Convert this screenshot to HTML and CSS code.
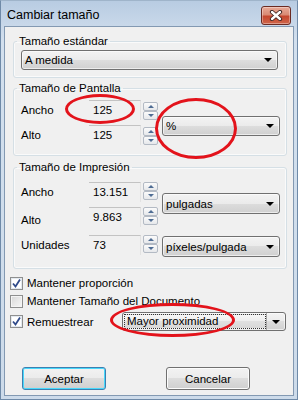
FILE: index.html
```html
<!DOCTYPE html>
<html lang="es">
  <head>
    <meta charset="UTF-8" />
    <title>Cambiar tamaño</title>
    <link rel="stylesheet" href="styles.css">
  </head>
  <body>
    <div class="window">
      <div class="titlebar">
        <span class="title">Cambiar tamaño</span>
        <div class="close">
          <svg width="14" height="11" viewBox="0 0 14 11">
            <path d="M3 2 L11 9 M11 2 L3 9" stroke="#3b2320" stroke-width="4.2" stroke-linecap="round" />
            <path d="M3 2 L11 9 M11 2 L3 9" stroke="#fff" stroke-width="2.4" stroke-linecap="round" />
          </svg>
        </div>
      </div>

      <div class="client">
        <fieldset class="group g-std">
          <legend>Tamaño estándar</legend>
          <div class="combo"><span class="combo-text">A medida</span><i class="arrow"></i></div>
        </fieldset>

        <fieldset class="group g-screen">
          <legend>Tamaño de Pantalla</legend>
          <div class="grid">
            <span class="lbl">Ancho</span>
            <div class="edit">125</div>
            <div class="spin"><span class="up"></span><span class="down"></span></div>
            <div class="combo unit unit-screen"><span class="combo-text">%</span><i class="arrow"></i></div>
            <span class="lbl">Alto</span>
            <div class="edit">125</div>
            <div class="spin"><span class="up"></span><span class="down"></span></div>
          </div>
        </fieldset>

        <fieldset class="group g-print">
          <legend>Tamaño de Impresión</legend>
          <div class="grid">
            <span class="lbl">Ancho</span>
            <div class="edit">13.151</div>
            <div class="spin"><span class="up"></span><span class="down"></span></div>
            <div class="combo unit unit-inch"><span class="combo-text">pulgadas</span><i class="arrow"></i></div>
            <span class="lbl lbl-low">Alto</span>
            <div class="edit">9.863</div>
            <div class="spin"><span class="up"></span><span class="down"></span></div>
            <span class="lbl">Unidades</span>
            <div class="edit">73</div>
            <div class="spin"><span class="up"></span><span class="down"></span></div>
            <div class="combo unit unit-res"><span class="combo-text">píxeles/pulgada</span><i class="arrow"></i></div>
          </div>
        </fieldset>

        <div class="checks">
          <label class="check-row">
            <span class="cb checked"><svg width="11" height="11" viewBox="0 0 11 11"><path d="M2 5.5 L4.5 8.5 L9 1.5" fill="none" stroke="#2f4a8a" stroke-width="1.8" /></svg></span>
            Mantener proporción
          </label>
          <label class="check-row">
            <span class="cb"></span>
            Mantener Tamaño del Documento
          </label>
          <div class="check-row row-resample">
            <span class="cb checked"><svg width="11" height="11" viewBox="0 0 11 11"><path d="M2 5.5 L4.5 8.5 L9 1.5" fill="none" stroke="#2f4a8a" stroke-width="1.8" /></svg></span>
            Remuestrear
            <div class="combo combo-focus">
              <span class="combo-text"><span class="focus-box">Mayor proximidad</span></span>
              <span class="drop"><i class="arrow"></i></span>
            </div>
          </div>
        </div>

        <div class="buttons">
          <button class="btn default">Aceptar</button>
          <button class="btn">Cancelar</button>
        </div>
      </div>

      <!-- marcas rojas dibujadas encima -->
      <div class="mark m1"></div>
      <div class="mark m2"></div>
      <div class="mark m3"></div>
    </div>
  </body>
</html>
```

FILE: styles.css
```css
* {
  box-sizing: border-box;
}
body {
  margin: 0;
  font-family: "Liberation Sans", Arial, sans-serif;
  font-size: 11.5px;
  color: #000;
  background: #fff;
}
.window {
  position: relative;
  width: 298px;
  height: 400px;
  padding: 0 3px 3px;
  background: linear-gradient(#b8cce2, #d3e0ee 40px, #cddbea);
  border: 1px solid #6f8aa8;
  border-top-color: #9fb4ca;
  display: flex;
  flex-direction: column;
}
.titlebar {
  height: 25px;
  display: flex;
  align-items: center;
  justify-content: space-between;
  padding-left: 3px;
}
.title {
  font-size: 12.5px;
  padding-top: 2px;
}
.close {
  width: 30px;
  height: 19px;
  margin-top: 3px;
  margin-right: 3px;
  border: 1px solid #6a2a22;
  border-radius: 3px;
  background: linear-gradient(#e8aa98, #d98a74 45%, #c5472e 55%, #d0674c);
  box-shadow: inset 0 0 0 1px rgba(255, 255, 255, 0.35);
  display: flex;
  align-items: center;
  justify-content: center;
}
.client {
  flex: 1;
  background: #f0f0f0;
  border: 1px solid #8399b2;
  display: flex;
  flex-direction: column;
}

/* group boxes */
.group {
  margin: 0 6px 0 8px;
  padding: 0 8px 0 7px;
  border: 1px solid #d5dfe5;
  border-radius: 3px;
  box-shadow: inset 0 0 0 1px #fafafa;
  min-width: 0;
}
.group legend {
  padding: 0 2px;
  margin-left: -4px;
  line-height: 14px;
  height: 14px;
}
.g-std {
  margin-top: 7px;
  padding-top: 2px;
  padding-bottom: 7px;
}
.g-screen {
  margin-top: 3px;
  padding-top: 5px;
  padding-bottom: 10px;
}
.g-print {
  margin-top: 4px;
  padding-top: 8px;
  padding-bottom: 13px;
}
.grid {
  display: grid;
  grid-template-columns: 68px 52px 17px 122px;
  align-items: start;
}
.g-screen .grid {
  grid-template-rows: 25px 20px;
}
.g-print .grid {
  grid-template-rows: 25px 28px 20px;
}
.lbl {
  height: 20px;
  line-height: 20px;
  grid-column: 1;
}
.lbl-low {
  padding-top: 3px;
}
.edit {
  height: 20px;
  line-height: 19px;
  padding-left: 4px;
  border-top: 1px solid #c3c3c3;
  border-right: 1px solid #e2e2e2;
  grid-column: 2;
}
.spin {
  grid-column: 3;
  width: 15px;
  height: 18px;
  margin-left: 2px;
  display: flex;
  flex-direction: column;
}
.g-screen .spin {
  margin-top: 2px;
}
.spin span {
  flex: 1;
  position: relative;
  border: 1px solid #b3bac4;
  border-radius: 2px;
  background: linear-gradient(#fbfbfb, #e6e8eb);
}
.spin span::after {
  content: "";
  position: absolute;
  left: 4px;
  top: 2px;
  border-left: 3px solid transparent;
  border-right: 3px solid transparent;
}
.spin .up::after {
  border-bottom: 3px solid #4f6d94;
}
.spin .down::after {
  border-top: 3px solid #4f6d94;
}

/* combos */
.combo {
  position: relative;
  height: 20px;
  border: 1px solid #707070;
  border-radius: 3px;
  background: linear-gradient(#f3f3f3, #ebebeb 50%, #dddddd 50%, #d0d0d0);
  box-shadow: inset 0 0 0 1px rgba(255, 255, 255, 0.6);
  display: flex;
  align-items: center;
}
.combo-text {
  flex: 1;
  padding-left: 3px;
  white-space: nowrap;
}
.arrow {
  width: 0;
  height: 0;
  margin-right: 5px;
  border-left: 4px solid transparent;
  border-right: 4px solid transparent;
  border-top: 4px solid #000;
}
.unit {
  grid-column: 4;
  margin-left: 4px;
}
.unit-screen {
  grid-row: 1 / span 2;
  margin-top: 16px;
}
.unit-inch {
  grid-row: 1 / span 2;
  margin-top: 11px;
  height: 21px;
}
.unit-res {
  grid-row: 3;
  margin-top: 1px;
  height: 21px;
}

/* checks */
.checks {
  margin: 5px 7px 0 5px;
}
.check-row {
  display: flex;
  align-items: center;
  gap: 4px;
  height: 18px;
}
.row-resample {
  height: 19px;
  margin-top: 2px;
}
.cb {
  width: 13px;
  height: 13px;
  border: 1px solid #8e8f8f;
  background: linear-gradient(135deg, #d8d8d8, #f7f7f7);
  box-shadow: inset 0 0 0 1px #f4f4f4;
  display: flex;
  align-items: center;
  justify-content: center;
}
.cb.checked {
  background: #fff;
  box-shadow: inset 0 0 0 1px #e3e9ef;
}
.combo-focus {
  margin-left: auto;
  width: 164px;
  height: 19px;
}
.combo-focus .combo-text {
  padding: 0 0 0 1px;
  height: 100%;
  display: flex;
  align-items: center;
}
.focus-box {
  flex: 1;
  height: 15px;
  line-height: 13px;
  padding-left: 2px;
  border: 1px dotted #333;
  background: linear-gradient(#f7f7f7, #ececec 50%, #e0e0e0 50%, #d8d8d8);
}
.drop {
  width: 19px;
  height: 100%;
  border-left: 1px solid #a8a8a8;
  display: flex;
  align-items: center;
  justify-content: center;
}
.drop .arrow {
  margin: 0;
}

/* buttons */
.buttons {
  display: flex;
  gap: 60px;
  margin: 36px 0 0 17px;
}
.btn {
  width: 84px;
  height: 23px;
  font-family: inherit;
  font-size: 11.5px;
  color: #000;
  border: 1px solid #707070;
  border-radius: 3px;
  background: linear-gradient(#f2f2f2, #ebebeb 50%, #dddddd 50%, #cfcfcf);
  box-shadow: inset 0 0 0 1px #fcfcfc;
  padding: 0;
}
.btn.default {
  border-color: #3c7fb1;
  box-shadow: inset 0 0 0 1px #48d8fb;
}

/* red ellipses */
.mark {
  position: absolute;
  border: 3px solid #e3131b;
  border-radius: 50%;
}
.m1 {
  left: 64px;
  top: 93px;
  width: 70px;
  height: 30px;
}
.m2 {
  left: 154px;
  top: 97px;
  width: 82px;
  height: 61px;
}
.m3 {
  left: 109px;
  top: 302px;
  width: 125px;
  height: 34px;
}
```
